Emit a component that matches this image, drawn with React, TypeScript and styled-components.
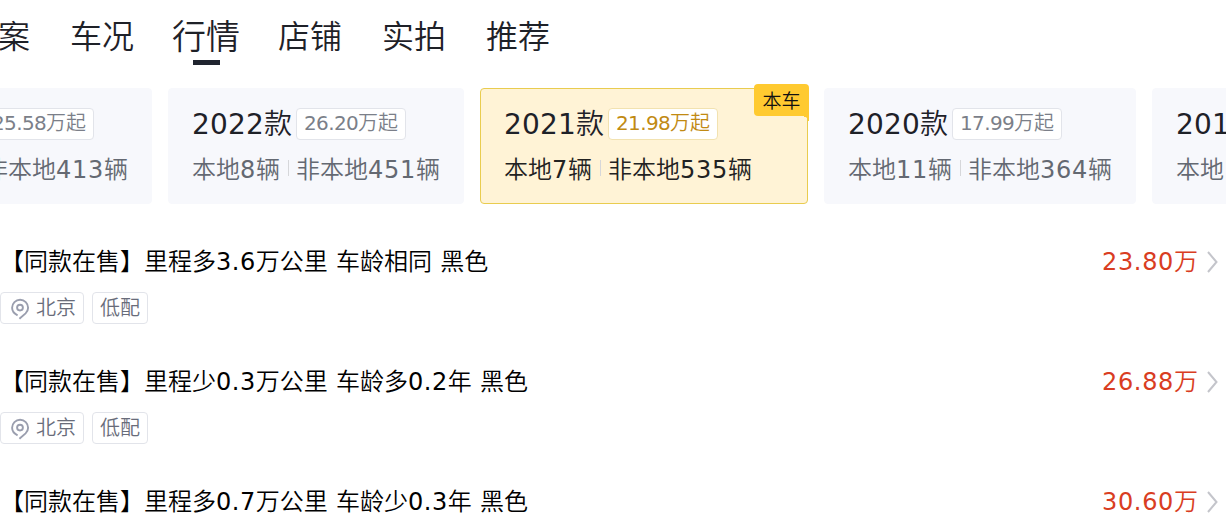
import React from "react";
import styled, { createGlobalStyle } from "styled-components";

const GlobalStyle = createGlobalStyle`
  * {
    box-sizing: border-box;
  }

  body {
    margin: 0;
    background: #fff;
    color: #000;
    font-family: "DejaVu Sans", "Noto Sans CJK SC", sans-serif;
    font-weight: 350;
    overflow: hidden;
  }
`;

const Page = styled.div`
  width: 100%;
  height: 518px;
  overflow: hidden;
`;

const Tabs = styled.nav`
  display: flex;
  gap: 40px;
  height: 84px;
  padding-top: 15px;
  margin-left: -34px;
`;

const Tab = styled.div<{ $active?: boolean }>`
  display: flex;
  flex-direction: column;
  align-items: center;
  width: 64px;
  font-size: ${({ $active }) => ($active ? "34px" : "32px")};
  line-height: 45px;
  color: #1e2128;
  white-space: nowrap;

  &::after {
    content: "";
    display: ${({ $active }) => ($active ? "block" : "none")};
    width: 27px;
    height: 5px;
    background: #20242f;
  }
`;

const Years = styled.div`
  display: flex;
  gap: 16px;
  padding-top: 4px;
  margin-left: -144px;
`;

const YearCard = styled.div<{ $active?: boolean }>`
  position: relative;
  flex: none;
  height: 116px;
  padding: ${({ $active }) => ($active ? "19px 55px 0 23px" : "19px 23px 0")};
  border: 1px solid ${({ $active }) => ($active ? "#e9cc4f" : "#f7f8fc")};
  border-radius: 4px;
  background: ${({ $active }) => ($active ? "#fff3d6" : "#f7f8fc")};
  color: ${({ $active }) => ($active ? "#222" : "#646972")};
`;

const YearHead = styled.div`
  display: flex;
  align-items: center;
  gap: 4px;
  height: 32px;
`;

const YearName = styled.div`
  padding-top: 2px;
  font-size: 28px;
  line-height: 32px;
  color: #1e2128;
  white-space: nowrap;
`;

const PriceTag = styled.div<{ $active?: boolean }>`
  height: 32px;
  padding: 0 7px;
  border: 1px solid ${({ $active }) => ($active ? "#f2e2b0" : "#e2e4ea")};
  border-radius: 4px;
  background: #fff;
  font-size: 20px;
  line-height: 29px;
  color: ${({ $active }) => ($active ? "#c18a13" : "#7b7f89")};
  white-space: nowrap;
`;

const Counts = styled.div`
  display: flex;
  align-items: center;
  height: 32px;
  margin-top: 14px;
  font-size: 24px;
  line-height: 32px;
  white-space: nowrap;
`;

const Divider = styled.span`
  width: 1px;
  height: 16px;
  margin: 0 7px 4px 8px;
  background: #d6d7da;
`;

const Corner = styled.div`
  position: absolute;
  top: -5px;
  right: -2px;
  width: 55px;
  height: 32px;
  border-radius: 4px 4px 0 4px;
  background: #ffca30;
  color: #111;
  font-size: 19px;
  line-height: 35px;
  text-align: center;

  &::after {
    content: "";
    position: absolute;
    top: 32px;
    right: 0;
    width: 5px;
    height: 5px;
    background: radial-gradient(circle at 0 100%, transparent 4px, #ffca30 4.5px);
  }
`;

const List = styled.div`
  padding-top: 40px;
`;

const Row = styled.div`
  height: 120px;
`;

const RowHead = styled.div`
  display: flex;
  align-items: center;
  height: 36px;
  padding-right: 8px;
  font-size: 24px;
  line-height: 36px;
  white-space: nowrap;
`;

const Price = styled.div`
  margin: 0 8px 0 auto;
  color: #d93d22;
`;

const Labels = styled.div`
  display: flex;
  gap: 8px;
  margin-top: 12px;
`;

const Label = styled.div`
  display: flex;
  align-items: center;
  height: 32px;
  padding: 0 7px;
  border: 1px solid #e2e4ea;
  border-radius: 4px;
  font-size: 20px;
  line-height: 30px;
  color: #686c7a;

  svg {
    margin-right: 4px;
  }
`;

const Digits = styled.span<{ $spacing: string }>`
  font-weight: 400;
  letter-spacing: ${({ $spacing }) => $spacing};
`;

// digit runs get their own tracking, the CJK characters stay on a full em
const Mixed = ({ text, spacing = "0.55px" }: { text: string; spacing?: string }) => (
  <span>
    {text.split(/([\d. ]+)/).map((part, i) =>
      i % 2 ? (
        <Digits key={i} $spacing={spacing}>
          {part}
        </Digits>
      ) : (
        part
      )
    )}
  </span>
);

const PinIcon = () => (
  <svg width="24" height="24" viewBox="0 0 24 24" fill="none" stroke="#9a9eae" strokeWidth="1.9">
    <path d="M9.6 19.3C6 17.6 4.1 15 4.1 11.8A8 8 0 0 1 20.1 11.8C20.1 14 19.2 15.9 17.6 17.4L11.4 22.8" />
    <circle cx="12" cy="11.6" r="2.9" />
  </svg>
);

const Chevron = () => (
  <svg width="12" height="24" viewBox="0 0 12 24" fill="none" stroke="#c4c5cb" strokeWidth="2">
    <path d="M2 2L10.5 12L2 22" />
  </svg>
);

const tabs = ["档案", "车况", "行情", "店铺", "实拍", "推荐"];

const years = [
  { name: "2023款", price: "25.58万起", local: "本地6辆", other: "非本地413辆" },
  { name: "2022款", price: "26.20万起", local: "本地8辆", other: "非本地451辆" },
  { name: "2021款", price: "21.98万起", local: "本地7辆", other: "非本地535辆", active: true },
  { name: "2020款", price: "17.99万起", local: "本地11辆", other: "非本地364辆" },
  { name: "2019款", price: "16.50万起", local: "本地12辆", other: "非本地210辆" },
];

const cars = [
  { title: "【同款在售】里程多3.6万公里 车龄相同 黑色", price: "23.80万" },
  { title: "【同款在售】里程少0.3万公里 车龄多0.2年 黑色", price: "26.88万" },
  { title: "【同款在售】里程多0.7万公里 车龄少0.3年 黑色", price: "30.60万" },
];

export default function App() {
  return (
    <Page>
      <GlobalStyle />
      <Tabs>
        {tabs.map((tab) => (
          <Tab key={tab} $active={tab === "行情"}>
            {tab}
          </Tab>
        ))}
      </Tabs>
      <Years>
        {years.map((year) => (
          <YearCard key={year.name} $active={year.active}>
            <YearHead>
              <YearName>
                <Mixed text={year.name} spacing="0.19px" />
              </YearName>
              <PriceTag $active={year.active}>
                <Mixed text={year.price} spacing="-0.65px" />
              </PriceTag>
            </YearHead>
            <Counts>
              <Mixed text={year.local} spacing="0.73px" />
              <Divider />
              <Mixed text={year.other} spacing="0.73px" />
            </Counts>
            {year.active && <Corner>本车</Corner>}
          </YearCard>
        ))}
      </Years>
      <List>
        {cars.map((car) => (
          <Row key={car.title}>
            <RowHead>
              <Mixed text={car.title} />
              <Price>
                <Mixed text={car.price} spacing="0.66px" />
              </Price>
              <Chevron />
            </RowHead>
            <Labels>
              <Label>
                <PinIcon />
                北京
              </Label>
              <Label>低配</Label>
            </Labels>
          </Row>
        ))}
      </List>
    </Page>
  );
}
